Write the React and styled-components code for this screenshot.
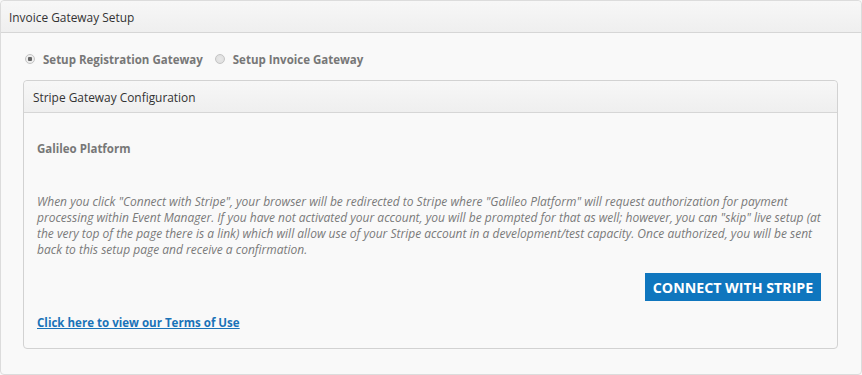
import React from "react";
import styled, { createGlobalStyle } from "styled-components";

const Global = createGlobalStyle`
  html, body { margin: 0; padding: 0; background: #f9f9f9; }
  body { font-family: "Open Sans", "Liberation Sans", sans-serif; }
  * { box-sizing: border-box; }
`;

const Panel = styled.div`
  width: 862px;
  height: 375px;
  background: #f9f9f9;
  border: 1px solid #dcdcdc;
  border-radius: 4px;
  display: flex;
  flex-direction: column;
`;

const PanelHeader = styled.div`
  height: ${p => p.$h || 32}px;
  background: linear-gradient(#f7f7f7, #efefef);
  border-bottom: 1px solid #d6d6d6;
  display: flex;
  align-items: center;
  padding-left: ${p => p.$pad || 8}px;
  font-size: 11.9px;
  color: #333;
  border-radius: 4px 4px 0 0;
`;

const PanelBody = styled.div`
  padding: 16px 23px 0 22px;
  display: flex;
  flex-direction: column;
`;

const RadioRow = styled.div`
  display: flex;
  align-items: center;
  height: 20px;
  margin-left: 2px;
`;

const RadioLabel = styled.label`
  display: flex;
  align-items: center;
  font-weight: 700;
  font-size: 11.5px;
  color: #777;
  margin-right: 12px;
`;

const Radio = styled.span`
  width: 10px;
  height: 10px;
  border-radius: 50%;
  border: 1px solid #c4c4c4;
  background: radial-gradient(circle, ${p => (p.$checked ? "#666 0 2px, #eee 2.5px" : "#e8e8e8 0, #dcdcdc 100%")});
  margin-right: 8px;
`;

const Inner = styled.div`
  margin-top: 11px;
  height: 269px;
  border: 1px solid #d2d2d2;
  border-radius: 4px;
  background: #f9f9f9;
  display: flex;
  flex-direction: column;
`;

const InnerBody = styled.div`
  padding: 28px 5px 0 13px;
  display: flex;
  flex-direction: column;
`;

const Subtitle = styled.div`
  font-weight: 700;
  font-size: 11.5px;
  color: #777;
  line-height: 16px;
`;

const Para = styled.p`
  margin: 37px 0 0;
  font-style: italic;
  font-size: 12px;
  line-height: 16px;
  color: #7a7a7a;
`;

const ButtonRow = styled.div`
  display: flex;
  justify-content: flex-end;
  margin-top: 15px;
  padding-right: 11px;
`;

const ConnectButton = styled.button`
  background: #0f76be;
  color: #fff;
  border: none;
  height: 28px;
  width: 176px;
  padding: 0;
  font-family: inherit;
  font-weight: 700;
  font-size: 14.2px;
  cursor: pointer;
`;

const TermsLink = styled.a`
  margin-top: 14px;
  font-weight: 700;
  font-size: 11.55px;
  color: #1a73b8;
  text-decoration: underline;
  line-height: 16px;
  align-self: flex-start;
`;

export default function App() {
  return (
    <>
      <Global />
      <Panel>
        <PanelHeader>Invoice Gateway Setup</PanelHeader>
        <PanelBody>
          <RadioRow>
            <RadioLabel><Radio $checked />Setup Registration Gateway</RadioLabel>
            <RadioLabel><Radio />Setup Invoice Gateway</RadioLabel>
          </RadioRow>
          <Inner>
            <PanelHeader $pad={9}>Stripe Gateway Configuration</PanelHeader>
            <InnerBody>
              <Subtitle>Galileo Platform</Subtitle>
              <Para>
                When you click "Connect with Stripe", your browser will be redirected to Stripe where "Galileo Platform" will request authorization for payment processing within Event Manager. If you have not activated your account, you will be prompted for that as well; however, you can "skip" live setup (at the very top of the page there is a link) which will allow use of your Stripe account in a development/test capacity. Once authorized, you will be sent back to this setup page and receive a confirmation.
              </Para>
              <ButtonRow>
                <ConnectButton>CONNECT WITH STRIPE</ConnectButton>
              </ButtonRow>
              <TermsLink href="#">Click here to view our Terms of Use</TermsLink>
            </InnerBody>
          </Inner>
        </PanelBody>
      </Panel>
    </>
  );
}
